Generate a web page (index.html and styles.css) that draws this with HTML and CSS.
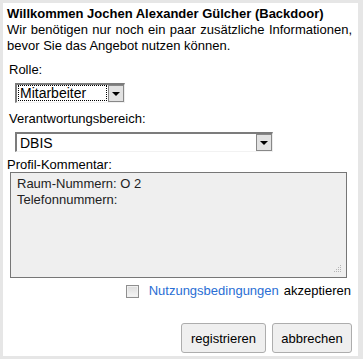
FILE: index.html
```html
<!DOCTYPE html>
<html lang="de">
<head>
<meta charset="utf-8">
<title>Willkommen</title>
<link rel="stylesheet" href="styles.css">
</head>
<body>
<div class="panel">
  <h1 class="title">Willkommen Jochen Alexander Gülcher (Backdoor)</h1>
  <p class="intro">Wir benötigen nur noch ein paar zusätzliche Informationen, bevor Sie das Angebot nutzen können.</p>

  <div class="label label-first">Rolle:</div>
  <div class="select select-role">
    <span class="select-value"><span class="focus-ring">Mitarbeiter</span></span>
    <span class="select-btn"><span class="arrow"></span></span>
  </div>

  <div class="label label-second">Verantwortungsbereich:</div>
  <div class="select select-area">
    <span class="select-value">DBIS</span>
    <span class="select-btn"><span class="arrow"></span></span>
  </div>

  <div class="label label-third">Profil-Kommentar:</div>
  <div class="textarea">
    <div>Raum-Nummern: O 2</div>
    <div>Telefonnummern:</div>
    <svg class="grip" width="8" height="8" viewBox="0 0 8 8"><g fill="#b5b5b5"><rect x="6" y="0" width="1" height="1"/><rect x="4" y="2" width="1" height="1"/><rect x="6" y="2" width="1" height="1"/><rect x="2" y="4" width="1" height="1"/><rect x="4" y="4" width="1" height="1"/><rect x="6" y="4" width="1" height="1"/><rect x="0" y="6" width="1" height="1"/><rect x="2" y="6" width="1" height="1"/><rect x="4" y="6" width="1" height="1"/><rect x="6" y="6" width="1" height="1"/></g></svg>
  </div>

  <div class="terms">
    <span class="checkbox"></span>
    <a class="link" href="#">Nutzungsbedingungen</a>
    <span>akzeptieren</span>
  </div>

  <div class="actions">
    <button class="btn btn-register">registrieren</button>
    <button class="btn btn-cancel">abbrechen</button>
  </div>
</div>
</body>
</html>
```

FILE: styles.css
```css
html, body {
  margin: 0;
  padding: 0;
}
body {
  background: #e6e6e6;
  font-family: "Liberation Sans", Arial, sans-serif;
  font-size: 13px;
  line-height: 16px;
  color: #000;
  width: 363px;
  height: 359px;
  overflow: hidden;
}
.panel {
  margin: 3px 0 0 3px;
  width: 355px;
  height: 353px;
  box-sizing: border-box;
  background: #fff;
  padding: 3px 6px 0 4px;
  border-right: 0;
}
.title {
  margin: 0;
  font-size: 13px;
  font-weight: bold;
  line-height: 16px;
}
.intro {
  margin: 0;
  text-align: justify;
}
.label {
  margin-left: 2px;
}
.label-first {
  margin-top: 8px;
}
.label-second {
  margin-top: 8px;
}
.label-third {
  margin-top: 5px;
  margin-left: 0;
  line-height: 15px;
}
.select {
  display: flex;
  align-items: stretch;
  box-sizing: border-box;
  height: 20px;
  margin-left: 8px;
  margin-top: 5px;
  border-top: 2px solid #7c7c7c;
  border-left: 2px solid #7c7c7c;
  border-right: 1px solid #ececec;
  border-bottom: 1px solid #f2f2f2;
  background: #fff;
}
.select-role {
  width: 110px;
}
.select-area {
  width: 258px;
}
.select-value {
  flex: 1;
  display: flex;
  align-items: center;
  padding-left: 1px;
  font-size: 14px;
}
.select-area .select-value {
  padding-left: 3px;
}
.focus-ring {
  display: flex;
  align-items: center;
  align-self: stretch;
  flex: 1;
  margin: 0 1px 1px 0;
  padding-left: 2px;
  outline: 1px dotted #000;
  outline-offset: -1px;
}
.select-btn {
  width: 16px;
  box-sizing: border-box;
  margin: 0 0 0 0;
  border: 1px solid #888;
  background: #e2e2e2;
  display: flex;
  align-items: center;
  justify-content: center;
}
.arrow {
  width: 0;
  height: 0;
  border-left: 4px solid transparent;
  border-right: 4px solid transparent;
  border-top: 4px solid #000;
  margin-top: 1px;
}
.textarea {
  position: relative;
  margin-left: 3px;
  width: 337px;
  height: 106px;
  box-sizing: border-box;
  border: 1px solid #767676;
  background: #efefef;
  padding: 3px 6px;
  color: #222;
}
.grip {
  position: absolute;
  right: 4px;
  bottom: 4px;
}
.terms {
  display: flex;
  justify-content: flex-end;
  align-items: center;
  margin-top: 5px;
  height: 16px;
  padding-right: 1px;
}
.checkbox {
  width: 11px;
  height: 11px;
  border: 1px solid #8f8f8f;
  background: linear-gradient(#dcdcdc, #f6f6f6);
  margin-right: 10px;
  box-shadow: inset 0 0 0 1px #f0f0f0;
}
.link {
  color: #2a6ed4;
  text-decoration: none;
  margin-right: 5px;
}
.actions {
  display: flex;
  justify-content: flex-end;
  gap: 6px;
  margin-top: 24px;
}
.btn {
  font-family: "Liberation Sans", Arial, sans-serif;
  font-size: 13px;
  color: #000;
  height: 30px;
  box-sizing: border-box;
  border: 1px solid #adadad;
  border-radius: 3px;
  background: #efefef;
  padding: 0;
}
.btn-register {
  width: 85px;
}
.btn-cancel {
  width: 80px;
}
```
